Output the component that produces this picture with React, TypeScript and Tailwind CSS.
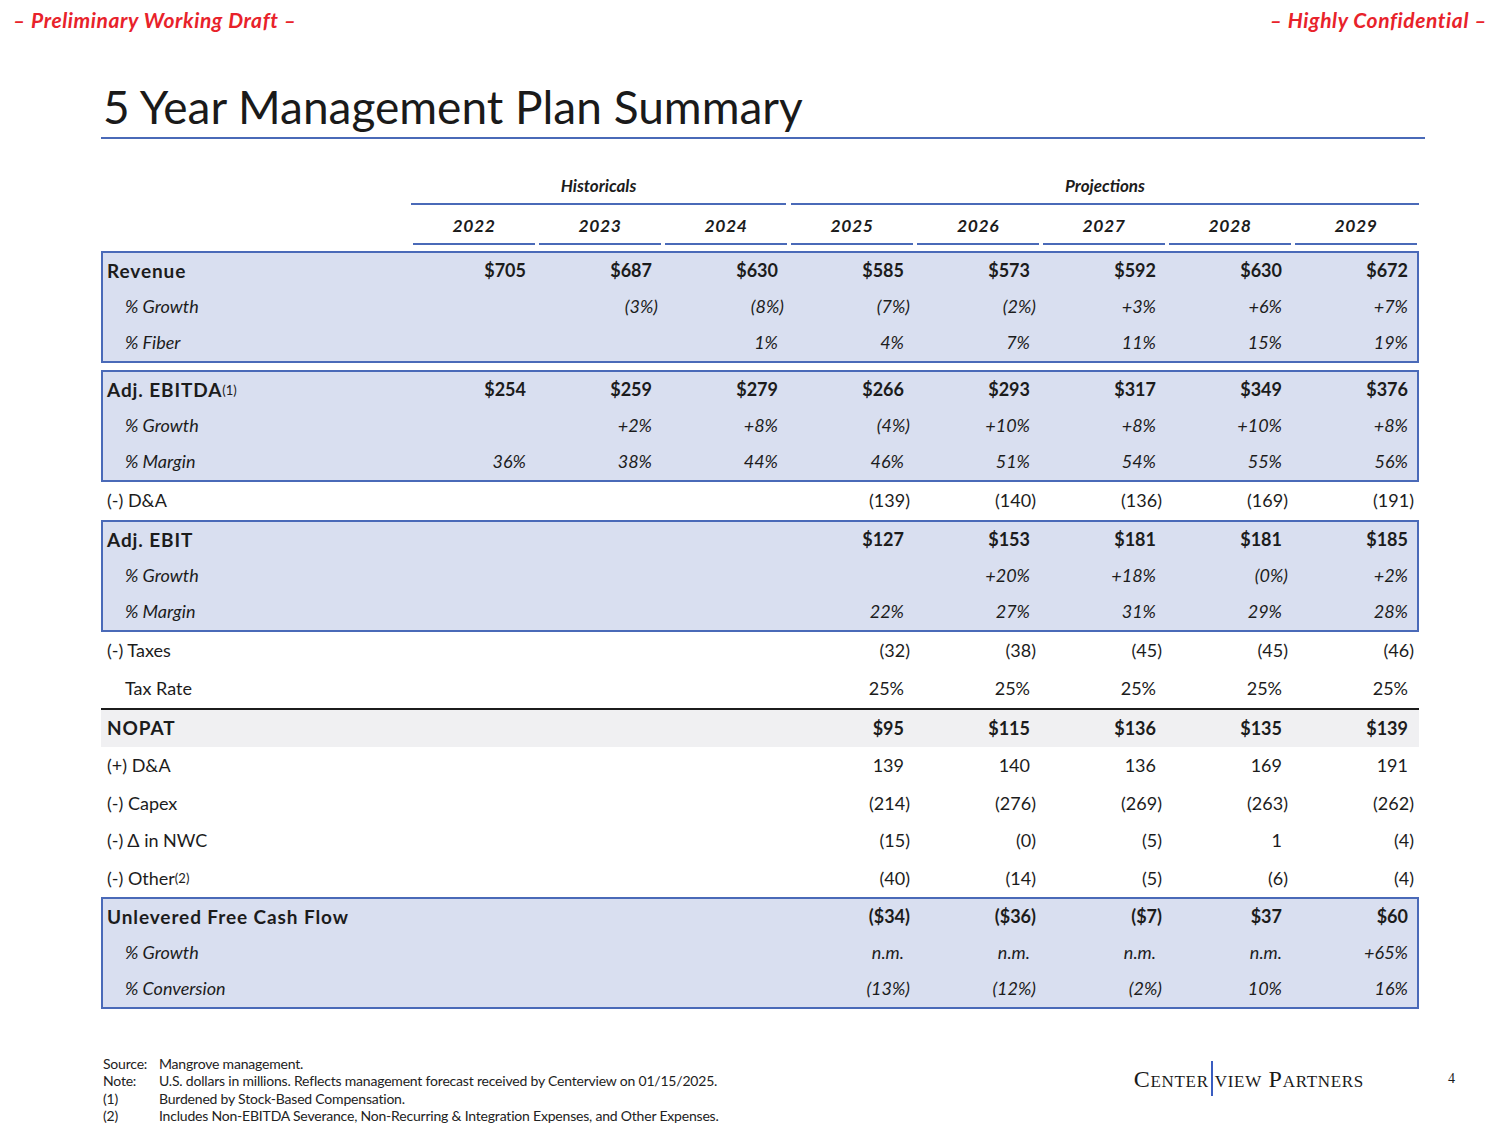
import type { ReactNode } from 'react'

const YEARS = ['2022', '2023', '2024', '2025', '2026', '2027', '2028', '2029']

type Kind = 'head' | 'sub' | 'plain' | 'indent'

type Line = { label: ReactNode; kind: Kind; values: string[] }

const p = (...v: string[]) => ['', '', '', ...v]

const Sup = ({ n }: { n: number }) => (
  <sup className="relative -top-[2px] text-[13px] font-normal tracking-normal">({n})</sup>
)

const REVENUE: Line[] = [
  { label: 'Revenue', kind: 'head', values: ['$705', '$687', '$630', '$585', '$573', '$592', '$630', '$672'] },
  { label: '% Growth', kind: 'sub', values: ['', '(3%)', '(8%)', '(7%)', '(2%)', '+3%', '+6%', '+7%'] },
  { label: '% Fiber', kind: 'sub', values: ['', '', '1%', '4%', '7%', '11%', '15%', '19%'] },
]

const EBITDA: Line[] = [
  {
    label: (
      <>
        Adj. EBITDA
        <Sup n={1} />
      </>
    ),
    kind: 'head',
    values: ['$254', '$259', '$279', '$266', '$293', '$317', '$349', '$376'],
  },
  { label: '% Growth', kind: 'sub', values: ['', '+2%', '+8%', '(4%)', '+10%', '+8%', '+10%', '+8%'] },
  { label: '% Margin', kind: 'sub', values: ['36%', '38%', '44%', '46%', '51%', '54%', '55%', '56%'] },
]

const EBIT: Line[] = [
  { label: 'Adj. EBIT', kind: 'head', values: p('$127', '$153', '$181', '$181', '$185') },
  { label: '% Growth', kind: 'sub', values: p('', '+20%', '+18%', '(0%)', '+2%') },
  { label: '% Margin', kind: 'sub', values: p('22%', '27%', '31%', '29%', '28%') },
]

const UFCF: Line[] = [
  { label: 'Unlevered Free Cash Flow', kind: 'head', values: p('($34)', '($36)', '($7)', '$37', '$60') },
  { label: '% Growth', kind: 'sub', values: p('n.m.', 'n.m.', 'n.m.', 'n.m.', '+65%') },
  { label: '% Conversion', kind: 'sub', values: p('(13%)', '(12%)', '(2%)', '10%', '16%') },
]

const GRID = 'grid grid-cols-[310px_repeat(8,126px)]'

function Row({ line, className = '' }: { line: Line; className?: string }) {
  const labelCls =
    line.kind === 'head'
      ? 'pl-[6px] text-[19px] font-bold tracking-[0.9px]'
      : line.kind === 'sub'
        ? 'pl-[24px] italic'
        : line.kind === 'indent'
          ? 'pl-[24px]'
          : 'pl-[6px]'
  const valueCls = line.kind === 'head' ? 'font-bold' : line.kind === 'sub' ? 'italic' : ''
  return (
    <div className={`${GRID} items-center ${className}`}>
      <div className={`whitespace-nowrap ${labelCls}`}>{line.label}</div>
      {line.values.map((v, i) => (
        <div key={i} className={`pr-[5px] text-right ${valueCls}`}>
          {v && <span className={v.endsWith(')') ? '' : 'pr-[6px]'}>{v}</span>}
        </div>
      ))}
    </div>
  )
}

function Box({ lines, className = '' }: { lines: Line[]; className?: string }) {
  return (
    <div className={`flex h-[112px] w-[1318px] flex-col bg-[#d9dff0] py-[2px] shadow-[inset_0_0_0_2px_#4a6ab8] ${className}`}>
      {lines.map((l, i) => (
        <Row key={i} line={l} className="flex-1" />
      ))}
    </div>
  )
}

export default function App() {
  return (
    <div className="relative h-[1125px] w-[1500px] overflow-hidden bg-white font-['Lato','Noto_Sans',sans-serif] text-[#1c1c1c]">
      <div className="flex justify-between px-[13px] pt-[7px] text-[21px] font-bold italic leading-[26px] tracking-[0.6px] text-[#e8222a]">
        <span>– Preliminary Working Draft –</span>
        <span>– Highly Confidential –</span>
      </div>

      <div className="mx-[101px] mt-[48px]">
        <h1 className="pl-[2px] text-[46px] leading-[51px] text-[#1a1a1a]">5 Year Management Plan Summary</h1>
        <div className="mt-[5px] h-[2px] w-[1324px] bg-[#4a6ab8]" />

        <div className={`${GRID} mt-[34px] text-[17px] font-bold italic`}>
          <div />
          <div className="col-span-3 mr-[3px] border-b-2 border-[#4a6ab8] pb-[4px] text-center">Historicals</div>
          <div className="col-span-5 ml-[2px] border-b-2 border-[#4a6ab8] pb-[4px] text-center">Projections</div>
        </div>
        <div className={`${GRID} mt-[8px] text-[17.5px] font-bold italic tracking-[0.6px]`}>
          <div />
          {YEARS.map((y) => (
            <div key={y} className="mx-[2px] border-b-2 border-[#4a6ab8] pb-[4px] text-center">
              {y}
            </div>
          ))}
        </div>

        <div className="mt-[6px] text-[18px]">
          <Box lines={REVENUE} />
          <Box lines={EBITDA} className="mt-[7px]" />
          <Row line={{ label: '(-) D&A', kind: 'plain', values: p('(139)', '(140)', '(136)', '(169)', '(191)') }} className="h-[38px]" />
          <Box lines={EBIT} />
          <Row line={{ label: '(-) Taxes', kind: 'plain', values: p('(32)', '(38)', '(45)', '(45)', '(46)') }} className="h-[38px]" />
          <Row line={{ label: 'Tax Rate', kind: 'indent', values: p('25%', '25%', '25%', '25%', '25%') }} className="h-[38px]" />
          <div className="h-[2px] w-[1318px] bg-[#1c1c1c]" />
          <Row
            line={{ label: 'NOPAT', kind: 'head', values: p('$95', '$115', '$136', '$135', '$139') }}
            className="h-[37px] w-[1318px] bg-[#f0f0f2]"
          />
          <Row line={{ label: '(+) D&A', kind: 'plain', values: p('139', '140', '136', '169', '191') }} className="h-[37.5px]" />
          <Row line={{ label: '(-) Capex', kind: 'plain', values: p('(214)', '(276)', '(269)', '(263)', '(262)') }} className="h-[37.5px]" />
          <Row line={{ label: '(-) Δ in NWC', kind: 'plain', values: p('(15)', '(0)', '(5)', '1', '(4)') }} className="h-[37.5px]" />
          <Row
            line={{
              label: (
                <>
                  (-) Other
                  <Sup n={2} />
                </>
              ),
              kind: 'plain',
              values: p('(40)', '(14)', '(5)', '(6)', '(4)'),
            }}
            className="h-[37.5px]"
          />
          <Box lines={UFCF} />
        </div>

        <div className="mt-[46px] flex items-start">
          <div className="grid grid-cols-[56px_1fr] pl-[2px] text-[14px] leading-[17.5px] tracking-[-0.2px] text-[#222]">
            <span>Source:</span>
            <span>Mangrove management.</span>
            <span>Note:</span>
            <span>U.S. dollars in millions. Reflects management forecast received by Centerview on 01/15/2025.</span>
            <span>(1)</span>
            <span>Burdened by Stock-Based Compensation.</span>
            <span>(2)</span>
            <span>Includes Non-EBITDA Severance, Non-Recurring &amp; Integration Expenses, and Other Expenses.</span>
          </div>
          <div className="ml-auto mr-[-56px] mt-[6px] flex items-center">
            <div className="flex items-center font-['Liberation_Serif',serif] text-[24px] tracking-[0.7px] text-[#1a1a1a] [font-variant:small-caps]">
              <span>Center</span>
              <span className="mx-[2px] h-[35px] w-[2px] bg-[#3a5cc0]" />
              <span>view Partners</span>
            </div>
            <span className="ml-[84px] font-['Liberation_Serif',serif] text-[14px]">4</span>
          </div>
        </div>
      </div>
    </div>
  )
}
